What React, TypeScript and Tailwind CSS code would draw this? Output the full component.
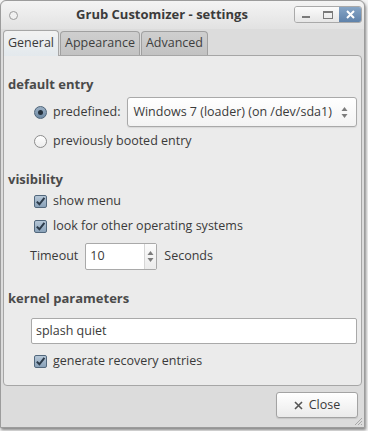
const font = { fontFamily: '"Open Sans", "Noto Sans", sans-serif' };

function Radio({ checked }: { checked?: boolean }) {
  return checked ? (
    <span className="flex h-[13px] w-[13px] items-center justify-center rounded-full border border-[#4e6479] bg-gradient-to-b from-[#9bb0c4] to-[#6f8aa4]">
      <span className="h-[5px] w-[5px] rounded-full bg-[#26323e]" />
    </span>
  ) : (
    <span className="h-[13px] w-[13px] rounded-full border border-[#8c8c8c] bg-gradient-to-b from-[#ffffff] to-[#ececec]" />
  );
}

function Check() {
  return (
    <span className="flex h-[13px] w-[13px] items-center justify-center rounded-[2px] border border-[#52687d] bg-gradient-to-b from-[#b6c7d7] to-[#8aa2b9]">
      <svg width="11" height="11" viewBox="0 0 11 11">
        <path d="M1.8 5.6 L4.4 8.3 L9.4 1.8" fill="none" stroke="#2c3b4a" strokeWidth="2" />
      </svg>
    </span>
  );
}

function Arrows() {
  return (
    <svg width="7" height="13" viewBox="0 0 7 13">
      <path d="M3.5 1 L6.5 5 L0.5 5 Z" fill="#7c7c7c" />
      <path d="M3.5 12 L6.5 8 L0.5 8 Z" fill="#7c7c7c" />
    </svg>
  );
}

export default function App() {
  return (
    <div className="h-[431px] w-[368px] overflow-hidden bg-[#f4f4f4] text-[12.5px] text-[#3a3a3a]" style={font}>
      <div className="flex h-[428px] w-[365px] flex-col rounded-t-[6px] border border-[#9c9c9c] bg-[#dcdcdc] shadow-[1px_2px_3px_rgba(0,0,0,0.45)]">
        {/* title bar */}
        <div className="flex h-[28px] items-center rounded-t-[6px] bg-gradient-to-b from-[#f4f4f4] to-[#e2e2e2] pl-[8px] pr-[2px]">
          <span className="h-[9px] w-[9px] rounded-full border border-[#9a9a9a] bg-[#f0f0f0]" />
          <div className="flex-1 pl-[12px] text-center text-[13px] font-bold text-[#3b3b3b]">Grub Customizer - settings</div>
          <div className="mt-[-1px] flex h-[17px] overflow-hidden rounded-[3px] border border-[#a9a9a9]">
            <div className="flex w-[22px] items-center justify-center bg-gradient-to-b from-[#fbfbfb] to-[#e6e6e6]">
              <span className="mt-[4px] h-[2px] w-[8px] bg-[#7a7a7a]" />
            </div>
            <div className="flex w-[22px] items-center justify-center bg-gradient-to-b from-[#fbfbfb] to-[#e6e6e6]">
              <span className="h-[8px] w-[10px] border border-t-2 border-[#7a7a7a]" />
            </div>
            <div className="flex w-[22px] items-center justify-center bg-gradient-to-b from-[#86a5c6] to-[#5f82aa]">
              <svg width="9" height="9" viewBox="0 0 9 9">
                <path d="M1 1 L8 8 M8 1 L1 8" stroke="#ffffff" strokeWidth="2" />
              </svg>
            </div>
          </div>
        </div>

        {/* tabs */}
        <div className="mt-[1px] flex items-end pl-[2px]">
          <div className="relative z-10 mb-[-1px] flex h-[26px] items-center rounded-t-[4px] border border-b-0 border-[#a6a6a6] bg-gradient-to-b from-[#f2f2f2] to-[#e3e9ed] px-[4px] text-[#3a3a3a]">
            General
          </div>
          <div className="ml-[1px] flex h-[24px] items-center rounded-t-[4px] border border-b-0 border-[#a0a0a0] bg-gradient-to-b from-[#cfcfcf] to-[#c2c2c2] px-[4px] text-[#3e3e3e]">
            Appearance
          </div>
          <div className="ml-[1px] flex h-[24px] items-center rounded-t-[4px] border border-b-0 border-[#a0a0a0] bg-gradient-to-b from-[#cfcfcf] to-[#c2c2c2] px-[4px] text-[#3e3e3e]">
            Advanced
          </div>
        </div>

        {/* notebook page */}
        <div className="mx-[2px] flex h-[331px] flex-col rounded-b-[4px] rounded-tr-[4px] border border-[#a6a6a6] bg-[#ebebeb] pl-[4px] pt-[19px]">
          <div className="h-[18px] text-[13px] font-bold leading-[18px] text-[#4a4a4a]">default entry</div>
          <div className="mt-[4px] flex h-[30px] items-center pl-[26px]">
            <Radio checked />
            <span className="ml-[6px]">predefined:</span>
            <div className="ml-[7px] flex h-[30px] w-[230px] items-center rounded-[3px] border border-[#a9a9a9] bg-gradient-to-b from-[#ffffff] to-[#f3f3f3] pl-[5px] pr-[8px] shadow-[0_1px_1px_rgba(0,0,0,0.08)]">
              <span className="flex-1 whitespace-nowrap">Windows 7 (loader) (on /dev/sda1)</span>
              <Arrows />
            </div>
          </div>
          <div className="mt-[4px] flex h-[20px] items-center pl-[26px]">
            <Radio />
            <span className="ml-[6px]">previously booted entry</span>
          </div>

          <div className="mt-[19px] h-[18px] text-[13px] font-bold leading-[18px] text-[#4a4a4a]">visibility</div>
          <div className="mt-[4px] flex h-[18px] items-center pl-[26px]">
            <Check />
            <span className="ml-[6px]">show menu</span>
          </div>
          <div className="mt-[7px] flex h-[18px] items-center pl-[26px]">
            <Check />
            <span className="ml-[6px]">look for other operating systems</span>
          </div>
          <div className="mt-[8px] flex h-[27px] items-center pl-[22px]">
            <span>Timeout</span>
            <div className="ml-[7px] flex h-[27px] w-[72px] items-stretch rounded-[2px] border border-[#a9a9a9] bg-white">
              <span className="flex flex-1 items-center pl-[4px] text-[#3a3a3a]">10</span>
              <div className="flex w-[12px] items-center justify-center border-l border-[#d6d6d6] bg-gradient-to-b from-[#fbfbfb] to-[#ececec]">
                <Arrows />
              </div>
            </div>
            <span className="ml-[7px]">Seconds</span>
          </div>

          <div className="mt-[19px] h-[18px] text-[13px] font-bold leading-[18px] text-[#4a4a4a]">kernel parameters</div>
          <div className="mt-[11px] pl-[23px] pr-[4px]">
            <div className="flex h-[26px] items-center rounded-[2px] border border-[#a9a9a9] bg-white pl-[4px]">splash quiet</div>
          </div>
          <div className="mt-[8px] flex h-[18px] items-center pl-[26px]">
            <Check />
            <span className="ml-[6px]">generate recovery entries</span>
          </div>
        </div>

        {/* buttons */}
        <div className="relative flex flex-1 items-start justify-end pr-[6px] pt-[6px]">
          <div className="flex h-[26px] w-[82px] items-center justify-center rounded-[3px] border border-[#a3a3a3] bg-gradient-to-b from-[#ffffff] to-[#ebebeb] shadow-[0_1px_1px_rgba(0,0,0,0.1)]">
            <svg width="9" height="9" viewBox="0 0 9 9" className="mr-[6px]">
              <path d="M1 1 L8 8 M8 1 L1 8" stroke="#555555" strokeWidth="1.6" />
            </svg>
            <span>Close</span>
          </div>
          <svg width="10" height="10" viewBox="0 0 10 10" className="absolute bottom-[1px] right-[1px]">
            <path d="M9 2 L2 9 M9 5 L5 9 M9 8 L8 9" stroke="#a8a8a8" strokeWidth="1" />
          </svg>
        </div>
      </div>
    </div>
  );
}
